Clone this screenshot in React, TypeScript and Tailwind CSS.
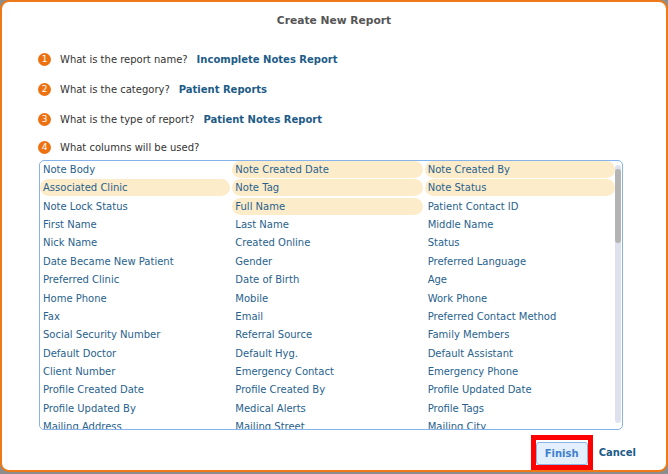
import React from 'react';

const questions = [
  { n: 1, q: 'What is the report name?', a: 'Incomplete Notes Report', mt: 'mt-[24px]' },
  { n: 2, q: 'What is the category?', a: 'Patient Reports', mt: 'mt-[16px]' },
  { n: 3, q: 'What is the type of report?', a: 'Patient Notes Report', mt: 'mt-[16px]' },
  { n: 4, q: 'What columns will be used?', a: '', mt: 'mt-[14px]' },
];

const columns: [string, boolean][] = [
  ['Note Body', false], ['Note Created Date', true], ['Note Created By', true],
  ['Associated Clinic', true], ['Note Tag', true], ['Note Status', true],
  ['Note Lock Status', false], ['Full Name', true], ['Patient Contact ID', false],
  ['First Name', false], ['Last Name', false], ['Middle Name', false],
  ['Nick Name', false], ['Created Online', false], ['Status', false],
  ['Date Became New Patient', false], ['Gender', false], ['Preferred Language', false],
  ['Preferred Clinic', false], ['Date of Birth', false], ['Age', false],
  ['Home Phone', false], ['Mobile', false], ['Work Phone', false],
  ['Fax', false], ['Email', false], ['Preferred Contact Method', false],
  ['Social Security Number', false], ['Referral Source', false], ['Family Members', false],
  ['Default Doctor', false], ['Default Hyg.', false], ['Default Assistant', false],
  ['Client Number', false], ['Emergency Contact', false], ['Emergency Phone', false],
  ['Profile Created Date', false], ['Profile Created By', false], ['Profile Updated Date', false],
  ['Profile Updated By', false], ['Medical Alerts', false], ['Profile Tags', false],
  ['Mailing Address', false], ['Mailing Street', false], ['Mailing City', false],
  ['Mailing State', false], ['Mailing Zip', false], ['Mailing Country', false],
  ['Billing Address', false], ['Billing Street', false], ['Billing City', false],
];

export default function App() {
  return (
    <div className="w-[668px] h-[474px] bg-[#8d8d8d] font-['DejaVu_Sans',Verdana,sans-serif]">
      <div className="h-[472px] w-[668px] bg-white border-2 border-[#ee7916] rounded-[9px] flex flex-col">
        {/* title */}
        <div className="pt-[12px] text-center text-[10.7px] leading-[14px] font-bold text-[#555555]">
          Create New Report
        </div>

        {/* steps */}
        <div className="pl-[36px]">
          {questions.map((s) => (
            <div key={s.n} className={`${s.mt} h-[14px] flex items-center`}>
              <span className="w-[13px] h-[13px] rounded-full bg-[#ee7111] text-white text-[9px] leading-[13px] text-center shrink-0">
                {s.n}
              </span>
              <span className="ml-[9px] text-[10px] text-[#333333] whitespace-nowrap">{s.q}</span>
              {s.a && (
                <span className="ml-[9px] text-[10px] font-bold text-[#1d5b87] whitespace-nowrap">{s.a}</span>
              )}
            </div>
          ))}
        </div>

        {/* columns list */}
        <div className="mt-[6px] ml-[37px] w-[584px] h-[270px] border border-[#86b4ea] rounded-[5px] relative overflow-hidden">
          <div className="grid grid-cols-3 gap-x-[2px] gap-y-[1.36px] auto-rows-[17px] w-[575px]">
            {columns.map(([label, sel]) => (
              <div
                key={label}
                className={`pl-[3px] text-[10px] leading-[17px] text-[#27628e] whitespace-nowrap rounded-full ${sel ? 'bg-[#fdecca]' : ''}`}
              >
                {label}
              </div>
            ))}
          </div>
          {/* scrollbar */}
          <div className="absolute right-[1px] top-[4px] w-[6px] h-[258px] rounded-[3px] bg-[#dde2ee]">
            <div className="w-[6px] h-[74px] mt-[4px] rounded-[3px] bg-[#b4b4b4]" />
          </div>
        </div>

        {/* actions */}
        <div className="mt-[5px] flex items-center justify-end pr-[30px]">
          <div className="border-[5px] border-[#ff0000] p-[0px]">
            <button className="w-[52px] h-[23px] bg-[#e3effc] border border-[#8ab4e8] rounded-[3px] text-[10px] font-bold text-[#3f7fcf]">
              Finish
            </button>
          </div>
          <span className="ml-[6px] text-[10px] font-bold text-[#1d5b87]">Cancel</span>
        </div>
      </div>
    </div>
  );
}
